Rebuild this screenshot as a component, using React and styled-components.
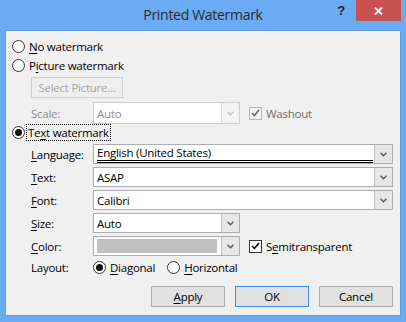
import React from "react";
import styled, { createGlobalStyle } from "styled-components";

const Global = createGlobalStyle`
  html, body { margin: 0; padding: 0; background: #6aabf4; }
  body {
    font-family: "Segoe UI", "Open Sans", "Noto Sans", sans-serif;
    font-size: 11.5px;
    letter-spacing: -0.25px;
    color: #000;
  }
`;

const Window = styled.div`
  width: 406px;
  height: 322px;
  background: #6aabf4;
  display: flex;
  flex-direction: column;
  box-sizing: border-box;
`;

const TitleBar = styled.div`
  height: 30px;
  flex: none;
  display: grid;
  grid-template-columns: 1fr auto 1fr;
  align-items: start;
`;

const Title = styled.div`
  grid-column: 2;
  font-size: 14px;
  letter-spacing: -0.3px;
  line-height: 30px;
  color: #2b2b2b;
`;

const TitleButtons = styled.div`
  grid-column: 3;
  justify-self: end;
  display: flex;
  padding-right: 5px;
`;

const HelpButton = styled.div`
  width: 30px;
  height: 21px;
  display: flex;
  align-items: center;
  justify-content: center;
  font-family: "Liberation Sans", Arial, sans-serif;
  font-weight: bold;
  font-size: 13px;
  color: #1e1e1e;
`;

const CloseButton = styled.div`
  width: 45px;
  height: 21px;
  background: #c75050;
  display: flex;
  align-items: center;
  justify-content: center;
`;

const Body = styled.div`
  flex: 1;
  margin: 0 5px 6px;
  background: #f0f0f0;
  border: 1px solid #5e9fe8;
  padding: 6px 7px 0 6px;
  display: flex;
  flex-direction: column;
`;

const Row = styled.div`
  height: ${(p) => p.$h}px;
  margin-top: ${(p) => p.$mt || 0}px;
  padding-left: ${(p) => p.$indent || 0}px;
  display: flex;
  align-items: center;
  flex: none;
`;

const Label = styled.div`
  width: 62px;
  flex: none;
  color: ${(p) => (p.$disabled ? "#8d8d8d" : "#000")};
`;

const U = styled.span`
  text-decoration: underline;
  text-underline-offset: 2px;
`;

const RadioBox = styled.span`
  width: 13px;
  height: 13px;
  box-sizing: border-box;
  border: 1px solid #333;
  border-radius: 50%;
  background: #fff;
  flex: none;
  display: flex;
  align-items: center;
  justify-content: center;
  margin-right: 4px;
  &::after {
    content: "";
    width: 7px;
    height: 7px;
    border-radius: 50%;
    background: #111;
    display: ${(p) => (p.$on ? "block" : "none")};
  }
`;

const Radio = styled.label`
  display: flex;
  align-items: center;
  margin-right: ${(p) => p.$mr || 0}px;
`;

const Focus = styled.span`
  outline: 1px dotted #000;
  outline-offset: 0;
  padding: 0 1px;
  line-height: 15px;
  margin-left: -2px;
`;

const PlainButton = styled.div`
  width: ${(p) => p.$w}px;
  height: 21px;
  box-sizing: border-box;
  border: 1px solid ${(p) => (p.$focus ? "#3c8ee0" : p.$disabled ? "#cfcfcf" : "#adadad")};
  background: ${(p) => (p.$disabled ? "#efefef" : "#e1e1e1")};
  color: ${(p) => (p.$disabled ? "#a3a3a3" : "#000")};
  display: flex;
  align-items: center;
  justify-content: center;
`;

const Field = styled.div`
  width: ${(p) => p.$w}px;
  height: 100%;
  box-sizing: border-box;
  border: 1px solid ${(p) => (p.$disabled ? "#cdcdcd" : "#abadb3")};
  background: #fff;
  display: flex;
  flex: none;
`;

const FieldValue = styled.div`
  flex: 1;
  display: flex;
  align-items: center;
  padding-left: 3px;
  color: ${(p) => (p.$disabled ? "#8d8d8d" : "#000")};
  min-width: 0;
`;

const LangText = styled.div`
  width: 100%;
  border-bottom: 3px double #000;
  line-height: 14px;
  margin-right: 1px;
  margin-top: 1px;
`;

const Swatch = styled.div`
  flex: 1;
  margin: 2px 4px 2px 3px;
  background: #c0c0c0;
`;

const DropButton = styled.div`
  width: 17px;
  flex: none;
  background: ${(p) => (p.$disabled ? "#f4f4f4" : "#e6e6e6")};
  border-left: 1px solid ${(p) => (p.$disabled ? "#dcdcdc" : "#c2c2c2")};
  display: flex;
  align-items: center;
  justify-content: center;
`;

const CheckBox = styled.span`
  width: 13px;
  height: 13px;
  box-sizing: border-box;
  border: 1px solid ${(p) => (p.$disabled ? "#b8b8b8" : "#333")};
  background: ${(p) => (p.$disabled ? "#f4f4f4" : "#fff")};
  display: flex;
  align-items: center;
  justify-content: center;
  margin-right: 4px;
  flex: none;
`;

const Check = styled.label`
  display: flex;
  align-items: center;
  margin-left: 9px;
  color: ${(p) => (p.$disabled ? "#6d6d6d" : "#000")};
`;

const Footer = styled.div`
  margin-top: 10px;
  display: flex;
  justify-content: flex-end;
  gap: 10px;
`;

const Chevron = ({ disabled }) => (
  <svg width="7" height="5" viewBox="0 0 7 5">
    <polyline points="0.5,0.8 3.5,3.8 6.5,0.8" fill="none" stroke={disabled ? "#c4c4c4" : "#5a5a5a"} strokeWidth="1.4" />
  </svg>
);

const Tick = ({ disabled }) => (
  <svg width="9" height="8" viewBox="0 0 9 8">
    <polyline points="1,4 3.4,6.5 8,1" fill="none" stroke={disabled ? "#6d6d6d" : "#111"} strokeWidth="1.8" />
  </svg>
);

const Select = ({ w, disabled, children }) => (
  <Field $w={w} $disabled={disabled}>
    {children}
    <DropButton $disabled={disabled}>
      <Chevron disabled={disabled} />
    </DropButton>
  </Field>
);

export default function App() {
  return (
    <Window>
      <Global />
      <TitleBar>
        <Title>Printed Watermark</Title>
        <TitleButtons>
          <HelpButton>?</HelpButton>
          <CloseButton>
            <svg width="9" height="8" viewBox="0 0 9 8">
              <path d="M1 0.5 L8 7.5 M8 0.5 L1 7.5" stroke="#fff" strokeWidth="1.8" />
            </svg>
          </CloseButton>
        </TitleButtons>
      </TitleBar>
      <Body>
        <Row $h={19}>
          <Radio>
            <RadioBox />
            <span><U>N</U>o watermark</span>
          </Radio>
        </Row>
        <Row $h={19}>
          <Radio>
            <RadioBox />
            <span>P<U>i</U>cture watermark</span>
          </Radio>
        </Row>
        <Row $h={21} $mt={2} $indent={19}>
          <PlainButton $w={92} $disabled>Select Picture...</PlainButton>
        </Row>
        <Row $h={22} $mt={4} $indent={19}>
          <Label $disabled>Scale:</Label>
          <Select w={147} disabled>
            <FieldValue $disabled>Auto</FieldValue>
          </Select>
          <Check $disabled>
            <CheckBox $disabled><Tick disabled /></CheckBox>
            Washout
          </Check>
        </Row>
        <Row $h={16}>
          <Radio>
            <RadioBox $on />
            <Focus>Te<U>x</U>t watermark</Focus>
          </Radio>
        </Row>
        <Row $h={20} $mt={4} $indent={19}>
          <Label><U>L</U>anguage:</Label>
          <Select w={300}>
            <FieldValue>
              <LangText>English (United States)</LangText>
            </FieldValue>
          </Select>
        </Row>
        <Row $h={20} $mt={3} $indent={19}>
          <Label><U>T</U>ext:</Label>
          <Select w={300}>
            <FieldValue>ASAP</FieldValue>
          </Select>
        </Row>
        <Row $h={20} $mt={3} $indent={19}>
          <Label><U>F</U>ont:</Label>
          <Select w={300}>
            <FieldValue>Calibri</FieldValue>
          </Select>
        </Row>
        <Row $h={20} $mt={3} $indent={19}>
          <Label><U>S</U>ize:</Label>
          <Select w={147}>
            <FieldValue>Auto</FieldValue>
          </Select>
        </Row>
        <Row $h={20} $mt={3} $indent={19}>
          <Label><U>C</U>olor:</Label>
          <Select w={147}>
            <Swatch />
          </Select>
          <Check>
            <CheckBox><Tick /></CheckBox>
            <span>S<U>e</U>mitransparent</span>
          </Check>
        </Row>
        <Row $h={18} $mt={2} $indent={19}>
          <Label>Layout:</Label>
          <Radio $mr={12}>
            <RadioBox $on />
            <span><U>D</U>iagonal</span>
          </Radio>
          <Radio>
            <RadioBox />
            <span><U>H</U>orizontal</span>
          </Radio>
        </Row>
        <Footer>
          <PlainButton $w={74}><span><U>A</U>pply</span></PlainButton>
          <PlainButton $w={74} $focus>OK</PlainButton>
          <PlainButton $w={74}>Cancel</PlainButton>
        </Footer>
      </Body>
    </Window>
  );
}
